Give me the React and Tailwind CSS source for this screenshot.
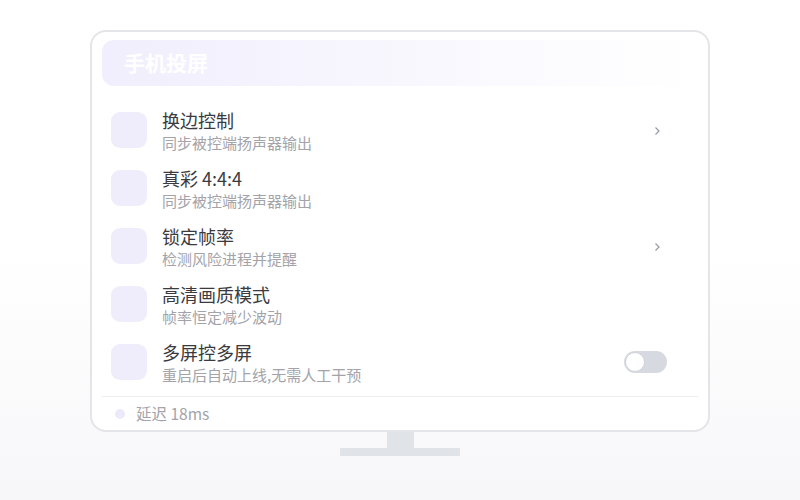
import React from "react";

const rows = [
  { title: "换边控制", desc: "同步被控端扬声器输出", action: "chevron" },
  { title: "真彩 4:4:4", desc: "同步被控端扬声器输出" },
  { title: "锁定帧率", desc: "检测风险进程并提醒", action: "chevron" },
  { title: "高清画质模式", desc: "帧率恒定减少波动" },
  { title: "多屏控多屏", desc: "重启后自动上线,无需人工干预", action: "toggle" },
];

const Row = ({ title, desc, action }) => (
  <div className="flex h-[58px] items-center pl-[9px] pr-[31px]">
    <div className="h-[36px] w-[36px] shrink-0 rounded-[9px] bg-[#efedfc]" />
    <div className="ml-[15px] flex flex-1 flex-col pt-[2px]">
      <span className="text-[18px] leading-[23px] text-[#3a3a3f]">{title}</span>
      <span className="text-[15px] leading-[21px] text-[#a3a3a9]">{desc}</span>
    </div>
    {action === "chevron" && (
      <svg width="8" height="12" viewBox="0 0 8 12" className="mr-[6px] mt-[1px]">
        <path d="M2.5 2.5 L6 6 L2.5 9.5" fill="none" stroke="#959aa3" strokeWidth="1.2" />
      </svg>
    )}
    {action === "toggle" && (
      <div className="flex h-[22px] w-[43px] items-center rounded-full bg-[#d6d9df] p-[1px]">
        <div className="h-[20px] w-[20px] rounded-full border border-[#cfd2d8] bg-white" />
      </div>
    )}
  </div>
);

const App = () => {
  return (
    <div
      className="h-[500px] w-[800px] bg-gradient-to-b from-white from-50% to-[#f7f7f9] pt-[30px]"
      style={{ fontFamily: '"Noto Sans CJK SC", "Noto Sans", sans-serif' }}
    >
      <div className="mx-auto flex w-[620px] flex-col items-center">
        <div className="flex h-[402px] w-full flex-col rounded-[16px] border-2 border-[#e3e5e9] bg-white px-[10px] pt-[8px]">
          <div className="flex h-[46px] items-center rounded-[12px] bg-gradient-to-r from-[#f1eefd] via-[#f8f7fe] to-white pl-[22px]">
            <span className="text-[21px] font-bold text-white">手机投屏</span>
          </div>
          <div className="mt-[15px] flex flex-col">
            {rows.map((r) => (
              <Row key={r.title} {...r} />
            ))}
          </div>
          <div className="mt-[5px] h-px bg-[#eceef1]" />
          <div className="flex h-[33px] items-center pl-[13px]">
            <div className="h-[10px] w-[10px] rounded-full bg-[#ece9fb]" />
            <span className="ml-[11px] text-[15.5px] text-[#a3a3a9]">延迟 18ms</span>
          </div>
        </div>
        <div className="h-[16px] w-[27px] bg-[#e0e3e8]" />
        <div className="h-[8px] w-[120px] bg-[#e0e3e8]" />
      </div>
    </div>
  );
};

export default App;
